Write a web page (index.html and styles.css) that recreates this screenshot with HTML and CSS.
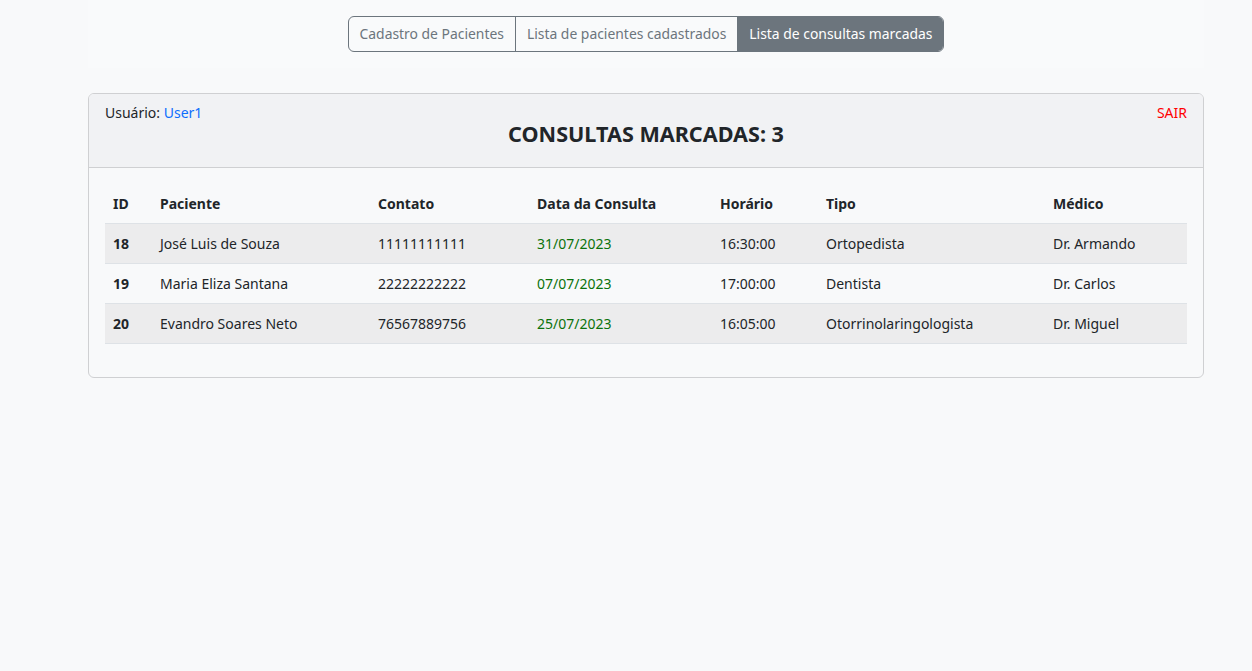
FILE: index.html
```html
<!DOCTYPE html>
<html lang="pt-BR">
<head>
<meta charset="utf-8">
<title>Consultas marcadas</title>
<link rel="stylesheet" href="styles.css">
</head>
<body>
<div class="page">
  <nav class="topnav">
    <div class="btn-group">
      <a class="btn" href="#">Cadastro de Pacientes</a>
      <a class="btn" href="#">Lista de pacientes cadastrados</a>
      <a class="btn active" href="#">Lista de consultas marcadas</a>
    </div>
  </nav>
  <section class="card">
    <header class="card-header">
      <div class="header-top">
        <span class="user">Usuário: <a class="user-link" href="#">User1</a></span>
        <a class="logout" href="#">SAIR</a>
      </div>
      <h1 class="title">CONSULTAS MARCADAS: 3</h1>
    </header>
    <div class="card-body">
      <table class="table">
        <colgroup>
          <col class="c-id"><col class="c-pac"><col class="c-con"><col class="c-data"><col class="c-hor"><col class="c-tipo"><col class="c-med">
        </colgroup>
        <thead>
          <tr><th>ID</th><th>Paciente</th><th>Contato</th><th>Data da Consulta</th><th>Horário</th><th>Tipo</th><th>Médico</th></tr>
        </thead>
        <tbody>
          <tr><td class="id">18</td><td>José Luis de Souza</td><td>11111111111</td><td class="date">31/07/2023</td><td>16:30:00</td><td>Ortopedista</td><td>Dr. Armando</td></tr>
          <tr><td class="id">19</td><td>Maria Eliza Santana</td><td>22222222222</td><td class="date">07/07/2023</td><td>17:00:00</td><td>Dentista</td><td>Dr. Carlos</td></tr>
          <tr><td class="id">20</td><td>Evandro Soares Neto</td><td>76567889756</td><td class="date">25/07/2023</td><td>16:05:00</td><td>Otorrinolaringologista</td><td>Dr. Miguel</td></tr>
        </tbody>
      </table>
    </div>
  </section>
</div>
</body>
</html>
```
FILE: styles.css
```css
* { box-sizing: border-box; }
html, body { margin: 0; padding: 0; }
body {
  background: #f8f9fa;
  color: #212529;
  font-family: "Noto Sans", "Open Sans", sans-serif;
  font-size: 14px;
  padding-left: 40px;
}
.page {
  width: 1116px;
  margin: 0 auto;
}
.topnav {
  height: 68px;
  background: #f9fafb;
  display: flex;
  justify-content: center;
  align-items: flex-start;
  padding-top: 16px;
  margin-bottom: 25px;
}
.btn-group {
  display: flex;
  border: 1px solid #6c757d;
  border-radius: 6px;
  overflow: hidden;
}
.btn {
  display: block;
  height: 34px;
  line-height: 34px;
  padding: 0 11px;
  color: #6c757d;
  text-decoration: none;
  font-size: 13.9px;
  border-left: 1px solid #6c757d;
}
.btn:first-child { border-left: 0; }
.btn.active { background: #6c757d; color: #fff; }
.card {
  border: 1px solid #cfd0d2;
  border-radius: 6px;
  background: #f8f9fa;
  overflow: hidden;
}
.card-header {
  background: #f1f2f4;
  border-bottom: 1px solid #cfd0d2;
  padding: 9px 16px 16px;
  height: 74px;
}
.header-top {
  display: flex;
  justify-content: space-between;
  line-height: 20px;
}
.user-link { color: #0d6efd; text-decoration: none; }
.logout { color: #ff0000; text-decoration: none; }
.title {
  margin: 0;
  text-align: center;
  font-size: 21.6px;
  line-height: 26px;
  font-weight: 700;
  margin-top: -2px;
}
.card-body { padding: 16px 16px 0; }
.table {
  width: 100%;
  border-collapse: collapse;
  table-layout: fixed;
  margin-bottom: 33px;
}
.c-id { width: 47px; }
.c-pac { width: 218px; }
.c-con { width: 159px; }
.c-data { width: 183px; }
.c-hor { width: 106px; }
.c-tipo { width: 227px; }
.c-med { width: 142px; }
.table th, .table td {
  text-align: left;
  padding: 0 8px;
  height: 40px;
  border-bottom: 1px solid #dee2e6;
  white-space: nowrap;
}
.table th { font-weight: 700; height: 39px; }
.table tbody tr:nth-child(odd) { background: #ececed; }
.table td.id { font-weight: 700; }
.table td.date { color: #0b720b; }
```
